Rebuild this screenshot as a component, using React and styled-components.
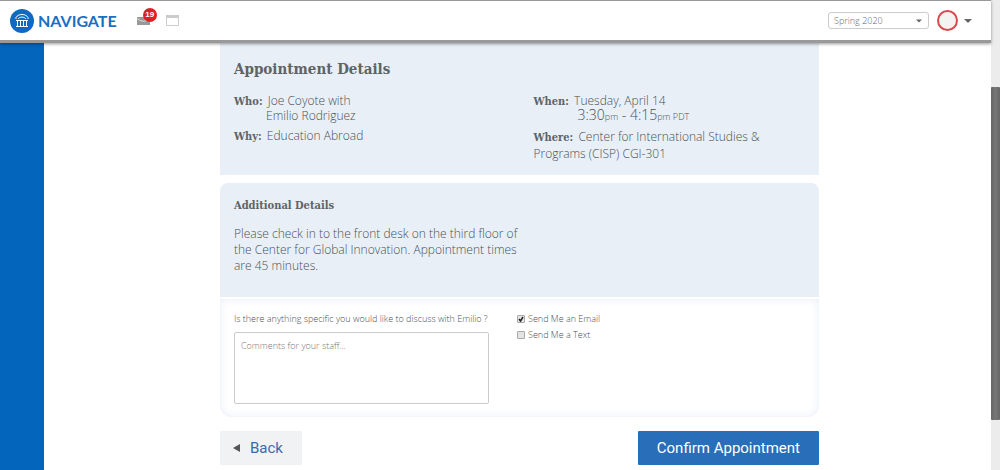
import React, { useState } from 'react';
import styled, { createGlobalStyle } from 'styled-components';

const GlobalStyle = createGlobalStyle`
  * {
    box-sizing: border-box;
  }

  body {
    margin: 0;
    background: #fff;
    color: #4a4f54;
    font-family: 'Open Sans', 'Noto Sans', sans-serif;
    font-size: 12px;
    font-weight: 350;
    line-height: 16px;
  }
`;

const slab = `'Roboto Slab', 'DejaVu Serif Condensed', 'DejaVu Serif', serif`;

const Page = styled.div`
  display: flex;
  min-height: 100vh;
`;

const Frame = styled.div`
  flex: 1;
  min-width: 0;
  display: flex;
  flex-direction: column;
`;

const Header = styled.header`
  position: relative;
  display: flex;
  align-items: center;
  justify-content: space-between;
  height: 43px;
  padding: 0 19px 0 10px;
  background: #fff;
  border-top: 1px solid #999;
  border-bottom: 3px solid #999;
  box-shadow: 0 1px 3px rgba(0, 0, 0, 0.4);
`;

const HeaderGroup = styled.div`
  display: flex;
  align-items: center;
`;

const Logo = styled.a`
  display: flex;
  align-items: center;
  gap: 4px;
  margin-right: 20px;
  color: #1a6fc4;
  font: 700 16px/24px Lato, sans-serif;
  text-decoration: none;
`;

const IconButton = styled.button`
  position: relative;
  display: flex;
  padding: 0;
  margin-right: 16px;
  border: 0;
  background: none;
`;

const Badge = styled.span`
  position: absolute;
  top: -9px;
  left: 6px;
  width: 14px;
  height: 14px;
  border-radius: 50%;
  background: #dd2027;
  color: #fff;
  font: 700 8px/14px 'Liberation Sans', sans-serif;
  text-align: center;
`;

const TermPicker = styled.div`
  position: relative;
  margin-right: 8px;

  select {
    display: block;
    width: 101px;
    height: 17px;
    padding: 0 5px;
    appearance: none;
    border: 1px solid #ccc;
    border-radius: 3px;
    background: #fff;
    color: #666;
    font: 350 9px/14px 'Open Sans', sans-serif;
  }

  svg {
    position: absolute;
    top: 7px;
    right: 7px;
    pointer-events: none;
  }
`;

const Account = styled.button`
  display: flex;
  align-items: center;
  gap: 6px;
  padding: 0;
  border: 0;
  background: none;
`;

const Avatar = styled.span`
  width: 21px;
  height: 21px;
  border: 2px solid #d94a50;
  border-radius: 50%;
  background: #f3f3f1;
`;

const Body = styled.div`
  flex: 1;
  display: flex;
`;

const Rail = styled.nav`
  width: 44px;
  background: #0465bd;
`;

const Main = styled.main`
  flex: 1;
  padding: 0 0 5px 4px;
`;

const Content = styled.form`
  max-width: 599px;
  margin: 0 auto;
`;

const Card = styled.section`
  padding: 14px 14px 8px;
  background: #e8eff7;
  border-radius: ${(props) => (props.$rounded ? '8px 8px 0 0' : '0')};
  margin-bottom: ${(props) => (props.$rounded ? '2px' : '8px')};
  min-height: ${(props) => (props.$rounded ? '114px' : '132px')};
`;

const Title = styled.h1`
  margin: 0 0 12px;
  font: 700 15px/24px ${slab};
  color: #5f6366;
`;

const Subtitle = styled.h2`
  margin: 0 0 12px;
  font: 700 11px/17px ${slab};
  color: #5f6366;
`;

const Columns = styled.div`
  display: grid;
  grid-template-columns: 1fr 1fr;
  column-gap: 28px;
`;

const Detail = styled.p`
  margin: 0 0 4px;
  line-height: ${(props) => (props.$loose ? '17px' : '15px')};

  strong {
    margin-right: 2px;
    font: 700 11px/12px ${slab};
    color: #5f6366;
  }
`;

const Indented = styled.span`
  display: block;
  padding-left: ${(props) => props.$indent}px;
  line-height: 16px;
`;

const Time = styled.span`
  font-size: ${(props) => (props.$small ? '9px' : '14px')};
  line-height: 14px;
`;

const Note = styled.p`
  max-width: 294px;
  margin: 0;
`;

const Options = styled.section`
  display: grid;
  grid-template-columns: 255px 1fr;
  column-gap: 28px;
  padding: 12px 14px 13px;
  border-radius: 0 0 12px 12px;
  box-shadow: inset 0 0 10px #e9eef9, inset 0 0 1px #dde4f2;
  font-size: 9px;
`;

const Comments = styled.div`
  label {
    display: block;
    margin-bottom: 5px;
    white-space: nowrap;
  }

  textarea {
    display: block;
    width: 100%;
    height: 72px;
    padding: 5px 6px;
    border: 1px solid #ccc;
    border-radius: 2px;
    resize: none;
    background: #fff;
    font: 350 9px/16px 'Open Sans', sans-serif;
  }

  textarea::placeholder {
    color: #777;
  }
`;

const CheckLabel = styled.label`
  display: flex;
  align-items: center;
  gap: 3px;

  input {
    appearance: none;
    width: 8px;
    height: 8px;
    margin: 0;
    border: 1px solid #aaa;
    border-radius: 1px;
    background: #e4e4e4;
  }

  input:checked {
    background: #e4e4e4
      url("data:image/svg+xml,%3Csvg xmlns='http://www.w3.org/2000/svg' viewBox='0 0 6 6'%3E%3Cpath d='M1 3l1.5 2L5 1' fill='none' stroke='%23222' stroke-width='1.5'/%3E%3C/svg%3E");
  }
`;

const Actions = styled.div`
  display: flex;
  justify-content: space-between;
  margin-top: 14px;
`;

const Button = styled.button`
  display: flex;
  align-items: center;
  gap: 10px;
  height: 34px;
  padding: ${(props) => (props.$primary ? '0 19px' : '0 19px 0 13px')};
  border: 0;
  border-radius: 1px;
  background: ${(props) => (props.$primary ? '#286eb8' : '#f0f2f4')};
  color: ${(props) => (props.$primary ? '#fff' : '#3a69ae')};
  font: 15px/20px Roboto, sans-serif;
`;

const ScrollTrack = styled.div`
  width: 9px;
  padding-top: 87px;
  background: #ececec;
`;

const ScrollThumb = styled.div`
  height: 333px;
  background: linear-gradient(90deg, #666, #777 50%, #666);
  border-radius: 1px;
`;

const LogoMark = () => (
  <svg width="24" height="24" viewBox="0 0 24 24" aria-hidden="true">
    <circle cx="12" cy="12" r="12" fill="#1169c2" />
    <g fill="none" stroke="#fff" strokeWidth="1">
      <path d="M6 10V8.500C8 4.500 16 4.500 18 8.500V10" />
      <path d="M8 10C9.500 7.500 14.500 7.500 16 10" />
      <path d="M6 11.500H18M6 17.500H18" />
      <path d="M7.500 12V17M10.500 12V17M13.500 12V17M16.500 12V17" />
    </g>
  </svg>
);

const Caret = ({ width = 8 }) => (
  <svg width={width} height="4" viewBox="0 0 8 4" aria-hidden="true">
    <path d="M0 0h8L4 4z" fill="#666" />
  </svg>
);

const App = () => {
  const [comments, setComments] = useState('');
  const [email, setEmail] = useState(true);
  const [text, setText] = useState(false);

  return (
    <>
      <GlobalStyle />
      <Page>
        <Frame>
          <Header>
            <HeaderGroup>
              <Logo href="#">
                <LogoMark />
                NAVIGATE
              </Logo>
              <IconButton type="button" aria-label="Messages">
                <svg width="13" height="8" viewBox="0 0 13 8">
                  <path d="M0 0h13v8H0z" fill="#999" />
                  <path d="M0 1.500Q6.500 7 13 1.500" fill="none" stroke="#ddd" />
                </svg>
                <Badge>19</Badge>
              </IconButton>
              <IconButton type="button" aria-label="Calendar">
                <svg width="13" height="11" viewBox="0 0 13 11">
                  <path d="M.5.5h12v10H.5z" fill="#fff" stroke="#ccc" />
                  <path d="M0 0h13v3H0z" fill="#ccc" />
                </svg>
              </IconButton>
            </HeaderGroup>
            <HeaderGroup>
              <TermPicker>
                <select aria-label="Term" defaultValue="Spring 2020">
                  <option>Spring 2020</option>
                </select>
                <Caret width={6} />
              </TermPicker>
              <Account type="button" aria-label="Account">
                <Avatar />
                <Caret />
              </Account>
            </HeaderGroup>
          </Header>
          <Body>
            <Rail />
            <Main>
              <Content onSubmit={(e) => e.preventDefault()}>
                <Card>
                  <Title>Appointment Details</Title>
                  <Columns>
                    <div>
                      <Detail>
                        <strong>Who:</strong> Joe Coyote with
                        <Indented $indent={32}>Emilio Rodriguez</Indented>
                      </Detail>
                      <Detail>
                        <strong>Why:</strong> Education Abroad
                      </Detail>
                    </div>
                    <div>
                      <Detail>
                        <strong>When:</strong> Tuesday, April 14
                        <Indented $indent={44}>
                          <Time>3:30</Time>
                          <Time $small>pm</Time>
                          <Time> - 4:15</Time>
                          <Time $small>pm PDT</Time>
                        </Indented>
                      </Detail>
                      <Detail $loose>
                        <strong>Where:</strong> Center for International Studies &amp; Programs (CISP) CGI-301
                      </Detail>
                    </div>
                  </Columns>
                </Card>
                <Card $rounded>
                  <Subtitle>Additional Details</Subtitle>
                  <Note>
                    Please check in to the front desk on the third floor of the Center for Global
                    Innovation. Appointment times are 45 minutes.
                  </Note>
                </Card>
                <Options>
                  <Comments>
                    <label htmlFor="comments">
                      Is there anything specific you would like to discuss with Emilio ?
                    </label>
                    <textarea
                      id="comments"
                      placeholder="Comments for your staff..."
                      value={comments}
                      onChange={(e) => setComments(e.target.value)}
                    />
                  </Comments>
                  <div>
                    <CheckLabel>
                      <input type="checkbox" checked={email} onChange={() => setEmail(!email)} />
                      Send Me an Email
                    </CheckLabel>
                    <CheckLabel>
                      <input type="checkbox" checked={text} onChange={() => setText(!text)} />
                      Send Me a Text
                    </CheckLabel>
                  </div>
                </Options>
                <Actions>
                  <Button type="button">
                    <svg width="7" height="8" viewBox="0 0 7 8" aria-hidden="true">
                      <path d="M7 0v8L0 4z" fill="#555" />
                    </svg>
                    Back
                  </Button>
                  <Button type="submit" $primary>
                    Confirm Appointment
                  </Button>
                </Actions>
              </Content>
            </Main>
          </Body>
        </Frame>
        <ScrollTrack>
          <ScrollThumb />
        </ScrollTrack>
      </Page>
    </>
  );
};

export default App;
